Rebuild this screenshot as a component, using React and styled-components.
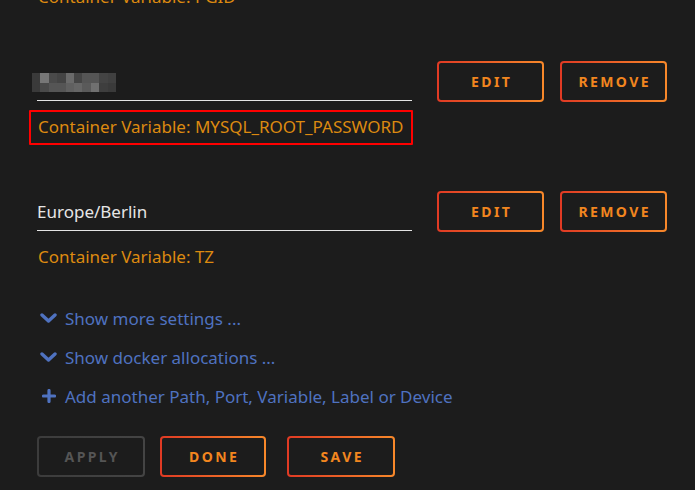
import React from "react";
import styled, { createGlobalStyle, css } from "styled-components";

const GlobalStyle = createGlobalStyle`
  html, body {
    margin: 0;
    padding: 0;
    background: #1c1c1c;
    overflow: hidden;
  }
  body {
    font-family: "Noto Sans", "Open Sans", sans-serif;
  }
`;

const Page = styled.div`
  width: 695px;
  height: 490px;
  overflow: hidden;
  background: #1c1c1c;
`;

const Form = styled.div`
  display: flex;
  flex-direction: column;
  padding-left: 37px;
  margin-top: -13px;
`;

const Entry = styled.div`
  display: flex;
  flex-direction: column;
  margin-top: ${(p) => (p.$first ? 0 : 54)}px;
`;

const EntryRow = styled.div`
  display: grid;
  grid-template-columns: 375px 107px 106px;
  column-gap: 25px;
  align-items: start;
  & > :nth-child(3) {
    margin-left: -9px;
  }
`;

const Field = styled.div`
  height: 40px;
  border-bottom: 1px solid #e4e4e4;
  display: flex;
  align-items: center;
  box-sizing: border-box;
  padding-top: 2px;
  color: #e6e6e6;
  font-size: 17px;
`;

const Masked = styled.div`
  display: grid;
  grid-template-columns: repeat(10, 8.4px);
  grid-template-rows: 10px 9px;
  margin-left: -5px;
  margin-top: 1px;
`;

const Cell = styled.span`
  display: block;
`;

const Description = styled.div`
  position: relative;
  align-self: flex-start;
  margin-top: ${(p) => (p.$lead ? 0 : 15)}px;
  margin-left: 1px;
  height: 20px;
  line-height: 20px;
  font-size: 17px;
  color: #dd8a10;
  ${(p) =>
    p.$highlight &&
    css`
      &::after {
        content: "";
        position: absolute;
        left: -9px;
        right: -10px;
        top: -7px;
        bottom: -8px;
        border: 2px solid #f00;
        border-radius: 1px;
      }
    `}
`;

const Button = styled.button`
  box-sizing: border-box;
  height: 41px;
  width: ${(p) => p.$w || 107}px;
  border: 2px solid transparent;
  border-radius: 4px;
  background:
    linear-gradient(#1c1c1c, #1c1c1c) padding-box,
    ${(p) =>
        p.$disabled
          ? "linear-gradient(90deg, #3c3c3c, #444)"
          : "linear-gradient(90deg, #e03a24, #f7882a)"}
      border-box;
  color: ${(p) => (p.$disabled ? "#555" : "#f2861f")};
  font-family: inherit;
  font-weight: 700;
  font-size: 14px;
  letter-spacing: 2.4px;
  text-indent: 2.4px;
  text-transform: uppercase;
  padding: 0;
  cursor: pointer;
`;

const Links = styled.div`
  display: flex;
  flex-direction: column;
  gap: 19px;
  margin-top: 41px;
  margin-left: 3px;
`;

const LinkRow = styled.a`
  display: flex;
  align-items: center;
  gap: 8px;
  height: 20px;
  color: #4f72c0;
  font-size: 17px;
  text-decoration: none;
  cursor: pointer;
`;

const IconBox = styled.span`
  display: inline-flex;
  width: 17px;
  justify-content: center;
`;

const Actions = styled.div`
  display: flex;
  gap: 15px;
  margin-top: 30px;
  & > :nth-child(3) {
    margin-left: 6px;
  }
`;

const Chevron = () => (
  <svg width="17" height="12" viewBox="0 0 17 12">
    <path
      d="M2 3 L8.5 9 L15 3"
      fill="none"
      stroke="#4f72c0"
      strokeWidth="3.4"
      strokeLinecap="round"
      strokeLinejoin="round"
    />
  </svg>
);

const Plus = () => (
  <svg width="14" height="14" viewBox="0 0 14 14">
    <path
      d="M7 1.5 V12.5 M1.5 7 H12.5"
      fill="none"
      stroke="#4f72c0"
      strokeWidth="3.2"
      strokeLinecap="round"
    />
  </svg>
);

const maskShades = [
  "#3a3a3a", "#777", "#4a4a4a", "#444", "#6a6a6a", "#454545", "#555", "#555", "#444", "#404040",
  "#3a3a3a", "#4a4a4a", "#555", "#555", "#606060", "#666", "#5a5a5a", "#707070", "#3e3e3e", "#3a3a3a",
];

const variables = [
  { id: "mysql", name: "MYSQL_ROOT_PASSWORD", masked: true, highlight: true },
  { id: "tz", name: "TZ", value: "Europe/Berlin" },
];

export default function App() {
  return (
    <Page>
      <GlobalStyle />
      <Form>
        <Entry $first>
          <Description $lead>Container Variable: PGID</Description>
        </Entry>
        {variables.map((v) => (
          <Entry key={v.id}>
            <EntryRow>
              <Field>
                {v.masked ? (
                  <Masked>
                    {maskShades.map((c, i) => (
                      <Cell key={i} style={{ background: c }} />
                    ))}
                  </Masked>
                ) : (
                  v.value
                )}
              </Field>
              <Button>Edit</Button>
              <Button>Remove</Button>
            </EntryRow>
            <Description $highlight={v.highlight}>
              Container Variable: {v.name}
            </Description>
          </Entry>
        ))}
        <Links>
          <LinkRow>
            <IconBox><Chevron /></IconBox>
            Show more settings ...
          </LinkRow>
          <LinkRow>
            <IconBox><Chevron /></IconBox>
            Show docker allocations ...
          </LinkRow>
          <LinkRow>
            <IconBox><Plus /></IconBox>
            Add another Path, Port, Variable, Label or Device
          </LinkRow>
        </Links>
        <Actions>
          <Button $disabled $w={108}>Apply</Button>
          <Button $w={106}>Done</Button>
          <Button $w={108}>Save</Button>
        </Actions>
      </Form>
    </Page>
  );
}
